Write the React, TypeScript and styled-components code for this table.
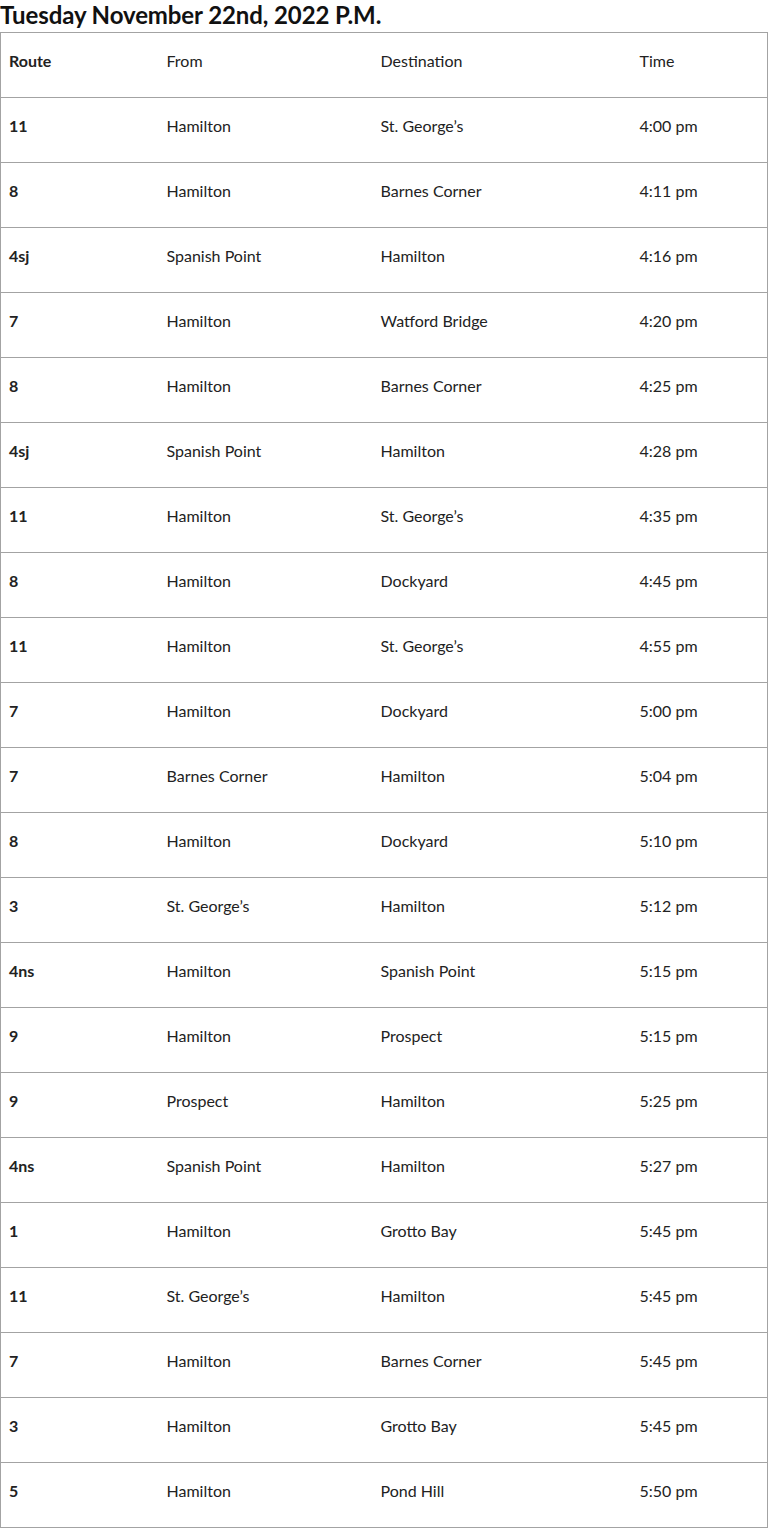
import React from 'react';
import styled, { createGlobalStyle } from 'styled-components';

const GlobalStyle = createGlobalStyle`
  html, body {
    margin: 0;
    padding: 0;
    background: #ffffff;
    font-family: Lato, "Open Sans", sans-serif;
    color: #222222;
  }
`;

interface Departure {
  route: string;
  from: string;
  destination: string;
  time: string;
}

const departures: Departure[] = [
  { route: '11', from: 'Hamilton', destination: 'St. George’s', time: '4:00 pm' },
  { route: '8', from: 'Hamilton', destination: 'Barnes Corner', time: '4:11 pm' },
  { route: '4sj', from: 'Spanish Point', destination: 'Hamilton', time: '4:16 pm' },
  { route: '7', from: 'Hamilton', destination: 'Watford Bridge', time: '4:20 pm' },
  { route: '8', from: 'Hamilton', destination: 'Barnes Corner', time: '4:25 pm' },
  { route: '4sj', from: 'Spanish Point', destination: 'Hamilton', time: '4:28 pm' },
  { route: '11', from: 'Hamilton', destination: 'St. George’s', time: '4:35 pm' },
  { route: '8', from: 'Hamilton', destination: 'Dockyard', time: '4:45 pm' },
  { route: '11', from: 'Hamilton', destination: 'St. George’s', time: '4:55 pm' },
  { route: '7', from: 'Hamilton', destination: 'Dockyard', time: '5:00 pm' },
  { route: '7', from: 'Barnes Corner', destination: 'Hamilton', time: '5:04 pm' },
  { route: '8', from: 'Hamilton', destination: 'Dockyard', time: '5:10 pm' },
  { route: '3', from: 'St. George’s', destination: 'Hamilton', time: '5:12 pm' },
  { route: '4ns', from: 'Hamilton', destination: 'Spanish Point', time: '5:15 pm' },
  { route: '9', from: 'Hamilton', destination: 'Prospect', time: '5:15 pm' },
  { route: '9', from: 'Prospect', destination: 'Hamilton', time: '5:25 pm' },
  { route: '4ns', from: 'Spanish Point', destination: 'Hamilton', time: '5:27 pm' },
  { route: '1', from: 'Hamilton', destination: 'Grotto Bay', time: '5:45 pm' },
  { route: '11', from: 'St. George’s', destination: 'Hamilton', time: '5:45 pm' },
  { route: '7', from: 'Hamilton', destination: 'Barnes Corner', time: '5:45 pm' },
  { route: '3', from: 'Hamilton', destination: 'Grotto Bay', time: '5:45 pm' },
  { route: '5', from: 'Hamilton', destination: 'Pond Hill', time: '5:50 pm' },
];

const Page = styled.div`
  width: 768px;
`;

const Title = styled.h2`
  margin: 0;
  height: 32px;
  font-size: 24px;
  line-height: 30px;
  font-weight: 700;
  color: #111111;
  letter-spacing: -0.1px;
`;

const Table = styled.table`
  width: 768px;
  border-collapse: collapse;
  table-layout: fixed;
  font-size: 16px;
`;

const Row = styled.tr`
  height: 65px;
  border: 1px solid #a3a3a3;
`;

const Cell = styled.td<{ $bold?: boolean }>`
  padding: 0 0 10px 8px;
  vertical-align: middle;
  text-align: left;
  font-weight: ${p => (p.$bold ? 700 : 400)};
  color: #222222;
`;

const HeadCell = styled.th<{ $bold?: boolean }>`
  padding: 0 0 10px 8px;
  vertical-align: middle;
  text-align: left;
  font-weight: ${p => (p.$bold ? 700 : 400)};
  color: #222222;
`;

export default function App() {
  return (
    <Page>
      <GlobalStyle />
      <Title>Tuesday November 22nd, 2022 P.M.</Title>
      <Table>
        <colgroup>
          <col style={{ width: 158 }} />
          <col style={{ width: 214 }} />
          <col style={{ width: 259 }} />
          <col />
        </colgroup>
        <thead>
          <Row>
            <HeadCell $bold>Route</HeadCell>
            <HeadCell>From</HeadCell>
            <HeadCell>Destination</HeadCell>
            <HeadCell>Time</HeadCell>
          </Row>
        </thead>
        <tbody>
          {departures.map((d, i) => (
            <Row key={i}>
              <Cell $bold>{d.route}</Cell>
              <Cell>{d.from}</Cell>
              <Cell>{d.destination}</Cell>
              <Cell>{d.time}</Cell>
            </Row>
          ))}
        </tbody>
      </Table>
    </Page>
  );
}
